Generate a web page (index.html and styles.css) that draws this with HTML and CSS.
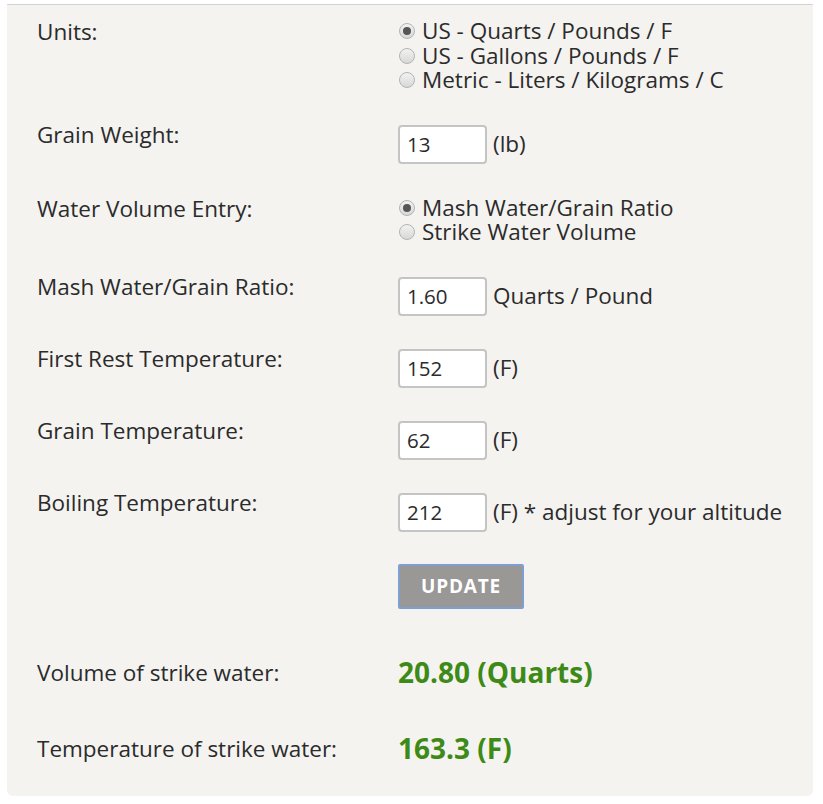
FILE: index.html
```html
<!DOCTYPE html>
<html lang="en">
<head>
    <meta charset="UTF-8">
    <meta name="viewport" content="width=device-width, initial-scale=1.0">
    <title>Strike Water Calculator</title>
    <link rel="stylesheet" href="styles.css">
</head>
<body>
    <div class="calc">
        <div class="row choice-row">
            <div class="label">Units:</div>
            <div class="field options">
                <label class="opt"><input type="radio" name="units" checked> US - Quarts / Pounds / F</label>
                <label class="opt"><input type="radio" name="units"> US - Gallons / Pounds / F</label>
                <label class="opt"><input type="radio" name="units"> Metric - Liters / Kilograms / C</label>
            </div>
        </div>

        <div class="row input-row">
            <div class="label">Grain Weight:</div>
            <div class="field">
                <input type="text" class="num" value="13">
                <span class="unit">(lb)</span>
            </div>
        </div>

        <div class="row choice-row">
            <div class="label">Water Volume Entry:</div>
            <div class="field options">
                <label class="opt"><input type="radio" name="entry" checked> Mash Water/Grain Ratio</label>
                <label class="opt"><input type="radio" name="entry"> Strike Water Volume</label>
            </div>
        </div>

        <div class="row input-row">
            <div class="label">Mash Water/Grain Ratio:</div>
            <div class="field">
                <input type="text" class="num" value="1.60">
                <span class="unit">Quarts / Pound</span>
            </div>
        </div>

        <div class="row input-row">
            <div class="label">First Rest Temperature:</div>
            <div class="field">
                <input type="text" class="num" value="152">
                <span class="unit">(F)</span>
            </div>
        </div>

        <div class="row input-row">
            <div class="label">Grain Temperature:</div>
            <div class="field">
                <input type="text" class="num" value="62">
                <span class="unit">(F)</span>
            </div>
        </div>

        <div class="row input-row">
            <div class="label">Boiling Temperature:</div>
            <div class="field">
                <input type="text" class="num" value="212">
                <span class="unit">(F) * adjust for your altitude</span>
            </div>
        </div>

        <div class="row">
            <div class="label"></div>
            <div class="field">
                <button class="update-btn">Update</button>
            </div>
        </div>

        <div class="row result first">
            <div class="label">Volume of strike water:</div>
            <div class="value">20.80 (Quarts)</div>
        </div>

        <div class="row result">
            <div class="label">Temperature of strike water:</div>
            <div class="value">163.3 (F)</div>
        </div>
    </div>
</body>
</html>
```

FILE: styles.css
```css
body {
    font-family: 'Open Sans', 'Liberation Sans', sans-serif;
    background-color: #fff;
    margin: 0;
    padding: 0;
    color: #2b2b2b;
}

.calc {
    background-color: #f4f3f0;
    border-top: 1px solid #d2d2d2;
    border-radius: 0 0 6px 6px;
    margin: 4px 0 0 7px;
    width: 806px;
    height: 792px;
    box-sizing: border-box;
    padding: 14px 0 0 30px;
    font-size: 22.5px;
}

.row {
    display: grid;
    grid-template-columns: 361px 1fr;
    align-items: start;
    margin-bottom: 32px;
}

.choice-row {
    margin-bottom: 31px;
}

.label {
    line-height: 25px;
}

.input-row .label {
    margin-top: -2px;
}

.field {
    display: flex;
    align-items: center;
    gap: 6px;
}

.options {
    flex-direction: column;
    align-items: flex-start;
    gap: 0;
}

.opt {
    display: flex;
    align-items: center;
    gap: 7px;
    line-height: 24.5px;
}

.opt input {
    appearance: none;
    -webkit-appearance: none;
    width: 16px;
    height: 16px;
    margin: 0 0 0 1px;
    border: 1px solid #b4b4b4;
    border-radius: 50%;
    background: linear-gradient(#f2f2f2, #d8d8d8);
    position: relative;
}

.opt input:checked::after {
    content: "";
    position: absolute;
    top: 3px;
    left: 3px;
    width: 8px;
    height: 8px;
    border-radius: 50%;
    background-color: #555;
}

.num {
    width: 89px;
    height: 39px;
    margin: 1px 0 0 0;
    box-sizing: border-box;
    border: 2px solid #c4c4c4;
    border-radius: 4px;
    background-color: #fff;
    padding: 0 7px;
    font-family: inherit;
    font-size: 20.5px;
    color: #2b2b2b;
}

.unit {
    line-height: 25px;
}

.update-btn {
    width: 126px;
    height: 45px;
    margin: 0;
    background-color: #999896;
    border: 2px solid #7d9fd2;
    border-radius: 2px;
    color: #fff;
    font-family: inherit;
    font-size: 19px;
    font-weight: 700;
    letter-spacing: 0.8px;
    text-transform: uppercase;
    cursor: pointer;
}

.result {
    align-items: center;
}

.result.first {
    margin-top: 47px;
    margin-bottom: 43px;
}

.result .value {
    color: #3d8a17;
    font-size: 28px;
    font-weight: 700;
    line-height: 33px;
}
```
